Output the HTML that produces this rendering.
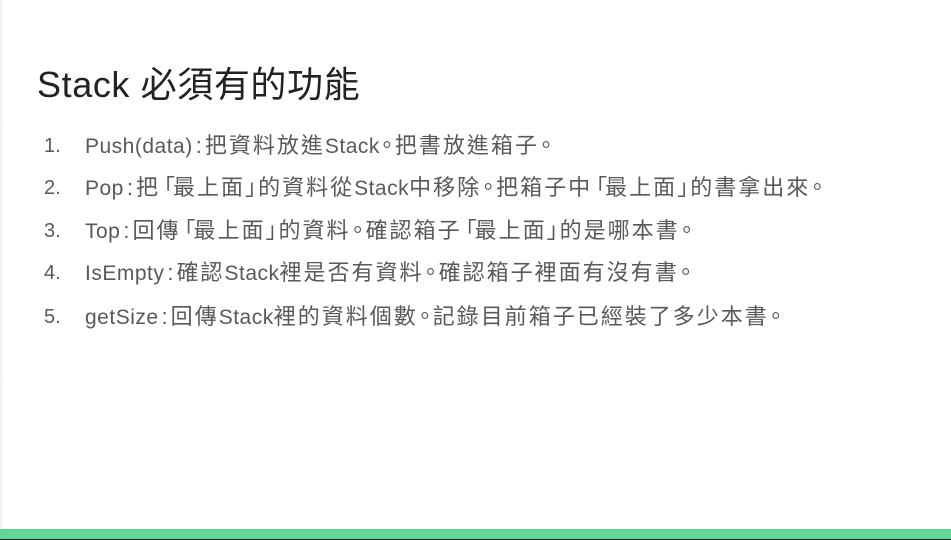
<!DOCTYPE html>
<html><head><meta charset="utf-8"><style>
body{margin:0;width:951px;height:540px;background:#fff;position:relative;overflow:hidden;font-family:"Liberation Sans","Noto Sans CJK TC",sans-serif}
.shadow{position:absolute;left:0;top:0;width:4px;height:529px;background:linear-gradient(to right,#eee,#fff)}
h1{position:absolute;left:37px;top:56px;margin:0;font-weight:normal;font-size:36px;color:#222;letter-spacing:0.6px;white-space:nowrap}
.row{position:absolute;left:0;font-size:21px;color:#595959;white-space:nowrap;line-height:24px}
.n{position:absolute;left:44px;font-size:20px}
.t{position:absolute;left:85px;letter-spacing:2px;font-size:22px}
.l{letter-spacing:0.5px;font-size:21px}
.c{margin:0 3px 0 3px;letter-spacing:0}
.o{letter-spacing:-7px;position:relative;left:-4px}
.ob{margin-left:-7px;letter-spacing:-2px}
.cb{letter-spacing:-9px}
.bar{position:absolute;left:0;top:529px;width:951px;height:10px;background:#64d398}
.bot{position:absolute;left:0;top:539px;width:951px;height:1px;background:#1a2a20}
</style></head><body>
<div class="shadow"></div>
<h1>Stack 必須有的功能</h1>
<div class="row" style="top:134px"><span class="n">1.</span><span class="t"><span class="l">Push(data)</span><span class="c">:</span>把資料放進<span class="l">Stack</span><span class="o">。</span>把書放進箱子<span class="o">。</span></span></div>
<div class="row" style="top:176px"><span class="n">2.</span><span class="t"><span class="l">Pop</span><span class="c">:</span>把<span class="ob">「</span>最上面<span class="cb">」</span>的資料從<span class="l">Stack</span>中移除<span class="o">。</span>把箱子中<span class="ob">「</span>最上面<span class="cb">」</span>的書拿出來<span class="o">。</span></span></div>
<div class="row" style="top:219px"><span class="n">3.</span><span class="t"><span class="l">Top</span><span class="c">:</span>回傳<span class="ob">「</span>最上面<span class="cb">」</span>的資料<span class="o">。</span>確認箱子<span class="ob">「</span>最上面<span class="cb">」</span>的是哪本書<span class="o">。</span></span></div>
<div class="row" style="top:261px"><span class="n">4.</span><span class="t"><span class="l">IsEmpty</span><span class="c">:</span>確認<span class="l">Stack</span>裡是否有資料<span class="o">。</span>確認箱子裡面有沒有書<span class="o">。</span></span></div>
<div class="row" style="top:305px"><span class="n">5.</span><span class="t"><span class="l">getSize</span><span class="c">:</span>回傳<span class="l">Stack</span>裡的資料個數<span class="o">。</span>記錄目前箱子已經裝了多少本書<span class="o">。</span></span></div>
<div class="bar"></div><div class="bot"></div>
</body></html>
